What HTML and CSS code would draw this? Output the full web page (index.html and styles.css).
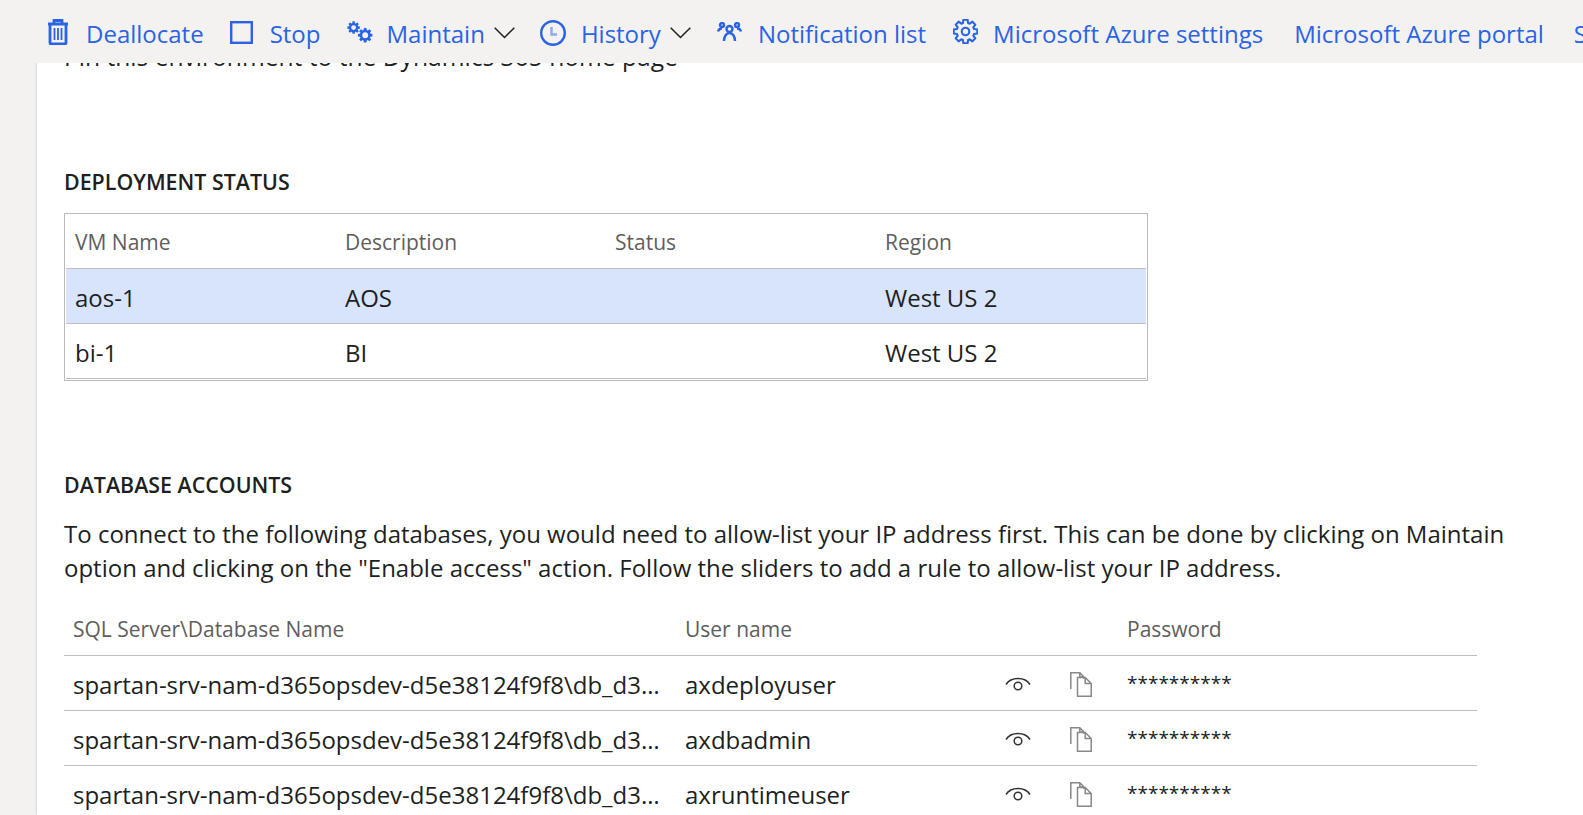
FILE: index.html
```html
<!DOCTYPE html>
<html lang="en">
<head>
    <meta charset="UTF-8">
    <title>Environment details</title>
    <link rel="stylesheet" href="styles.css">
</head>
<body>
<svg class="defs" width="0" height="0">
    <defs>
        <path id="cog" d="M9.510 3.870L10 .67h4l.49 3.200L15.990 4.500l2.610-1.920 2.820 2.820-1.920 2.610.63 1.500 3.200.49v4l-3.200.49-.63 1.500 1.920 2.610-2.820 2.820-2.610-1.920-1.500.63-.49 3.200h-4l-.49-3.200-1.500-.63-2.610 1.920-2.820-2.820 1.920-2.610-.63-1.500-3.200-.49v-4l3.200-.49.63-1.500-1.920-2.610 2.820-2.820 2.610 1.920z"/>
        <g id="eye"><path d="M1 9.500C6 1.500 20 1.500 25 9.500"/><circle cx="13" cy="11" r="3.800"/></g>
        <g id="copy"><path d="M.8 17V.8h9l4.200 4.200M14 5v2M9.800.8V5H14"/><path d="M7.500 5.500h7.700l6 6v12.700H7.500zM15.200 5.500v6h6"/></g>
    </defs>
</svg>
<div class="toolbar">
    <a class="tool"><svg class="ic trash" viewBox="0 0 22 26"><path d="M1 5h20M7 5V1.500h8V5M3 5v18.500c0 1 .5 1.500 1.500 1.500h13c1 0 1.500-.5 1.500-1.500V5"/><path class="thin" d="M7.500 9v12M11 9v12M14.500 9v12"/></svg><span>Deallocate</span></a>
    <a class="tool"><svg class="ic square" viewBox="0 0 23 23"><rect x="1.200" y="1.200" width="20.600" height="20.600"/></svg><span>Stop</span></a>
    <a class="tool"><svg class="ic gears" viewBox="0 0 26 22"><use href="#cog" transform="translate(0 0) scale(.55)" class="cogfill"/><circle class="hole" cx="6.600" cy="6.600" r="2.400"/><use href="#cog" transform="translate(10.500 6.500) scale(.64)" class="cogfill"/><circle class="hole" cx="18.200" cy="14.200" r="2.900"/></svg><span>Maintain</span><svg class="chev" viewBox="0 0 21 12"><path d="M.7.7l9.800 9.800L20.300.7"/></svg></a>
    <a class="tool"><svg class="ic clock" viewBox="0 0 26 26"><circle cx="13" cy="13" r="11.800"/><path class="hand" d="M11.500 7v7.500h5.500"/></svg><span>History</span><svg class="chev chev-h" viewBox="0 0 21 12"><path d="M.7.7l9.800 9.800L20.300.7"/></svg></a>
    <a class="tool"><svg class="ic people" viewBox="0 0 25 20"><circle cx="5" cy="3" r="2"/><circle cx="20" cy="3" r="2"/><circle cx="12.500" cy="7" r="3"/><path d="M1 9.500c.5-2 1.500-3 4-3M24 9.500c-.5-2-1.500-3-4-3M7 19c0-4 2-8 5.500-8s5.500 4 5.500 8"/></svg><span>Notification list</span></a>
    <a class="tool"><svg class="ic cog-big" viewBox="0 0 24 24"><use href="#cog"/><circle cx="12" cy="12" r="3.600"/></svg><span>Microsoft Azure settings</span></a>
    <a class="tool plain"><span>Microsoft Azure portal</span></a>
    <a class="tool plain last"><span>S</span></a>
</div>
<div class="page">
    <div class="gutter"></div>
    <div class="content">
        <p class="pin">Pin this environment to the Dynamics 365 home page</p>

        <h3 class="head status-head">DEPLOYMENT STATUS</h3>
        <div class="vm-table">
            <div class="vm-row vm-top"><span>VM Name</span><span>Description</span><span>Status</span><span>Region</span></div>
            <div class="vm-row selected"><span>aos-1</span><span>AOS</span><span></span><span>West US 2</span></div>
            <div class="vm-row"><span>bi-1</span><span>BI</span><span></span><span>West US 2</span></div>
        </div>

        <h3 class="head db-head">DATABASE ACCOUNTS</h3>
        <p class="note">To connect to the following databases, you would need to allow-list your IP address first. This can be done by clicking on Maintain option and clicking on the "Enable access" action. Follow the sliders to add a rule to allow-list your IP address.</p>
        <div class="db-table">
            <div class="db-row db-top"><span>SQL Server\Database Name</span><span>User name</span><span></span><span></span><span>Password</span></div>
            <div class="db-row">
                <span class="clip">spartan-srv-nam-d365opsdev-d5e38124f9f8\db_d365opsdev_axdb</span><span>axdeployuser</span>
                <svg class="eye" viewBox="0 0 26 16"><use href="#eye"/></svg>
                <svg class="copy" viewBox="0 0 22 25"><use href="#copy"/></svg>
                <span class="stars">**********</span>
            </div>
            <div class="db-row">
                <span class="clip">spartan-srv-nam-d365opsdev-d5e38124f9f8\db_d365opsdev_axdb</span><span>axdbadmin</span>
                <svg class="eye" viewBox="0 0 26 16"><use href="#eye"/></svg>
                <svg class="copy" viewBox="0 0 22 25"><use href="#copy"/></svg>
                <span class="stars">**********</span>
            </div>
            <div class="db-row">
                <span class="clip">spartan-srv-nam-d365opsdev-d5e38124f9f8\db_d365opsdev_axdb</span><span>axruntimeuser</span>
                <svg class="eye" viewBox="0 0 26 16"><use href="#eye"/></svg>
                <svg class="copy" viewBox="0 0 22 25"><use href="#copy"/></svg>
                <span class="stars">**********</span>
            </div>
        </div>
    </div>
</div>
</body>
</html>
```

FILE: styles.css
```css
html, body {
    margin: 0;
    height: 815px;
    overflow: hidden;
}

body {
    font-family: "Open Sans", "Noto Sans", sans-serif;
    font-size: 24px;
    color: #201f1e;
    background-color: #fff;
}

.defs {
    position: absolute;
}

/* top command bar, sits over the scrolled content */
.toolbar {
    position: absolute;
    top: 0;
    left: 0;
    right: 0;
    height: 63px;
    display: flex;
    align-items: center;
    gap: 26px;
    padding-left: 47px;
    background-color: #f3f2f1;
    white-space: nowrap;
    overflow: hidden;
    z-index: 2;
}

.tool {
    display: flex;
    align-items: center;
    color: #2a63e4;
}

.tool span {
    padding-top: 4px;
}

.plain {
    margin-left: 5px;
}

.plain.last {
    margin-left: 4px;
}

.ic {
    margin-right: 15px;
    fill: none;
    stroke: #2a63e4;
    stroke-width: 2;
}

.trash {
    width: 22px;
    height: 26px;
    margin-right: 17px;
    stroke-width: 2.800;
}

.trash .thin {
    stroke-width: 1.800;
}

.square {
    width: 23px;
    height: 23px;
    margin-top: 2px;
    margin-right: 17px;
    stroke-width: 2.400;
}

.gears {
    width: 26px;
    height: 22px;
    margin-right: 14px;
}

.cogfill {
    fill: #2a63e4;
    stroke: none;
}

.hole {
    fill: #f3f2f1;
    stroke: none;
}

.clock {
    width: 26px;
    height: 26px;
    margin-top: 2px;
    stroke-width: 2.400;
}

.clock .hand {
    stroke: #8ea9ee;
}

.people {
    width: 25px;
    height: 20px;
    margin-right: 16px;
    stroke-width: 2.400;
}

.cog-big {
    width: 25px;
    height: 25px;
    margin-left: 1px;
    stroke-linejoin: round;
}

.chev {
    width: 21px;
    height: 12px;
    margin: 3px -1px 0 9px;
    fill: none;
    stroke: #201f1e;
    stroke-width: 1.500;
}

.chev-h {
    margin: 3px 0 0 9px;
}

.page {
    display: flex;
    height: 815px;
}

.gutter {
    width: 37px;
    background-color: #f3f2f1;
}

.content {
    flex: 1;
    padding-left: 27px;
    overflow: hidden;
    box-shadow: 0 0 3px rgba(0, 0, 0, .18);
}

.pin {
    margin: 40px 0 0;
    line-height: 33px;
    font-size: 24.600px;
}

.head {
    margin: 0;
    font-size: 21.400px;
    font-weight: 600;
    color: #201f1e;
}

.status-head {
    margin-top: 94px;
}

.vm-table {
    width: 1080px;
    margin-top: 17px;
    border: 1px solid #bbb;
    padding: 1px;
}

.vm-row {
    display: grid;
    grid-template-columns: 270px 270px 270px 1fr;
    align-items: center;
    box-sizing: border-box;
    height: 55px;
    padding: 2px 0 0 9px;
    border-bottom: 1px solid #c0bebc;
}

.vm-row.vm-top {
    height: 54px;
    padding-top: 0;
}

.vm-top, .db-top {
    color: #605e5c;
    font-size: 21px;
    font-weight: 500;
}

.selected {
    background-color: #d8e4fb;
}

.db-head {
    margin-top: 89px;
}

.note {
    margin: 18px 0 0;
    width: 1460px;
    line-height: 34px;
}

.db-table {
    width: 1413px;
    margin-top: 16px;
}

.db-row {
    display: grid;
    grid-template-columns: 612px 320px 65px 57px 1fr;
    align-items: center;
    box-sizing: border-box;
    height: 55px;
    padding: 2px 0 0 9px;
    border-bottom: 1px solid #c0bebc;
}

.clip {
    overflow: hidden;
    text-overflow: ellipsis;
    white-space: nowrap;
    padding-right: 20px;
}

.stars {
    font-size: 19px;
    margin-bottom: 2px;
}

.eye, .copy {
    fill: none;
    stroke-width: 1.500;
}

.eye {
    width: 26px;
    height: 16px;
    margin-bottom: 2px;
    stroke: #323130;
}

.copy {
    width: 22px;
    height: 25px;
    margin-top: 1px;
    stroke: #8a8886;
}
```
